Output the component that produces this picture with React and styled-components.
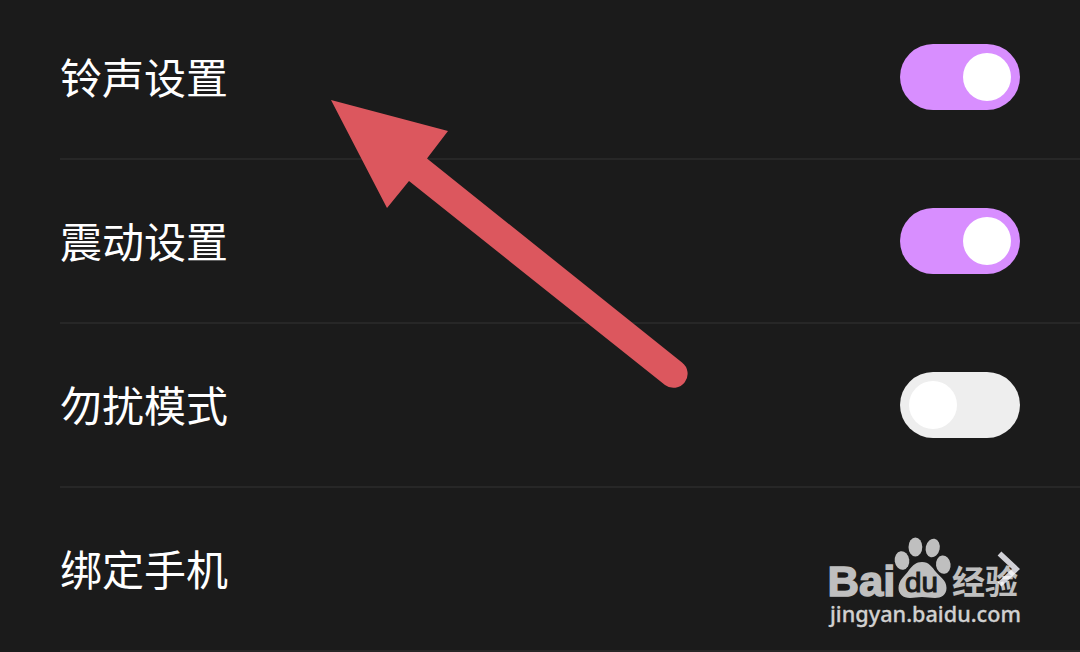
import React, { useState } from 'react';
import styled, { createGlobalStyle } from 'styled-components';

const GlobalStyle = createGlobalStyle`
  body {
    margin: 0;
    background: #1b1b1b;
  }
`;

const Screen = styled.div`
  position: relative;
  height: 652px;
  overflow: hidden;
  background: #1b1b1b;
  color: #fff;
  font-family: 'Noto Sans CJK SC', sans-serif;
`;

const List = styled.ul`
  list-style: none;
  margin: -4px 0 0;
  padding: 0 0 0 60px;
`;

const Row = styled.li`
  display: flex;
  align-items: center;
  justify-content: space-between;
  box-sizing: border-box;
  height: 164px;
  padding-right: 60px;
  border-bottom: 2px solid #272727;
`;

const Label = styled.span`
  padding-bottom: 2px;
  font-size: 42px;
  line-height: 60px;
`;

const Switch = styled.button`
  display: flex;
  align-items: center;
  justify-content: ${({ $on }) => ($on ? 'flex-end' : 'flex-start')};
  width: 120px;
  height: 66px;
  padding: 0 9px;
  border: none;
  border-radius: 33px;
  background: ${({ $on }) => ($on ? '#d88eff' : '#eeeeee')};
`;

const Knob = styled.span`
  width: 48px;
  height: 48px;
  border-radius: 50%;
  background: #fff;
`;

const Chevron = styled.svg`
  width: 24px;
  height: 40px;
`;

const Arrow = styled.svg`
  position: absolute;
  left: 330px;
  top: 98px;
  pointer-events: none;
`;

const Watermark = styled.svg`
  position: absolute;
  left: 820px;
  top: 530px;
  pointer-events: none;
`;

const Sample = () => {
  const [rows, setRows] = useState([
    { id: 1, title: '铃声设置', on: true },
    { id: 2, title: '震动设置', on: true },
    { id: 3, title: '勿扰模式', on: false },
    { id: 4, title: '绑定手机', link: true },
  ]);

  const toggle = id => {
    setRows(rows.map(row => (row.id === id ? { ...row, on: !row.on } : row)));
  };

  return (
    <Screen>
      <GlobalStyle />
      <List>
        {rows.map(row => (
          <Row key={row.id}>
            <Label>{row.title}</Label>
            {row.link ? (
              <Chevron viewBox="0 0 24 40">
                <path
                  d="M3.500 4.500 L20 20 L3.500 35.500"
                  fill="none"
                  stroke="#d0d0d6"
                  strokeWidth="5.500"
                />
              </Chevron>
            ) : (
              <Switch $on={row.on} onClick={() => toggle(row.id)}>
                <Knob />
              </Switch>
            )}
          </Row>
        ))}
      </List>

      <Arrow width="360" height="292" viewBox="330 98 360 292">
        <path
          d="M331 100 L448 131 L427 158.500 L682 362.500 A14 14 0 0 1 665 385 L409 181 L387 208 Z"
          fill="#dc575e"
        />
      </Arrow>

      <Watermark width="210" height="106" viewBox="820 530 210 106">
        <g fill="#fff" opacity="0.72">
          <text
            x="827.500"
            y="596"
            fontFamily="'Liberation Sans', sans-serif"
            fontWeight="700"
            fontSize="43"
            textLength="68"
            lengthAdjust="spacingAndGlyphs"
            stroke="#fff"
            strokeWidth="1.400"
          >
            Bai
          </text>
          <ellipse cx="902" cy="560.500" rx="7.300" ry="9.300" transform="rotate(-8 902 560.500)" />
          <ellipse cx="915.400" cy="547" rx="6.900" ry="9.500" />
          <ellipse cx="932.700" cy="548" rx="7" ry="9.400" transform="rotate(12 932.700 548)" />
          <ellipse cx="943.300" cy="564.700" rx="7.300" ry="9.200" transform="rotate(-8 943.300 564.700)" />
          <path d="M922 562 C929 562 932 567 936 572 C940 577 946.500 580 946.500 588 C946.500 595 941 598 935 598 C930 598 927 597 922 597 C917 597 915 598 910 598 C903 598 898.500 594 898.500 588 C898.500 580 905 576 909 570 C913 565 916 562 922 562 Z" />
          <text
            x="952"
            y="593.500"
            fontFamily="'Noto Sans CJK SC', sans-serif"
            fontWeight="700"
            fontSize="33"
            textLength="66"
          >
            经验
          </text>
        </g>
        <text
          x="905"
          y="591.500"
          fill="#1b1b1b"
          stroke="#1b1b1b"
          strokeWidth="1"
          fontFamily="'Liberation Sans', sans-serif"
          fontSize="27"
          textLength="33"
          lengthAdjust="spacingAndGlyphs"
        >
          du
        </text>
        <text
          x="830"
          y="621.500"
          fill="#d0d0d0"
          stroke="#d0d0d0"
          strokeWidth="0.300"
          fontFamily="'Noto Sans', sans-serif"
          fontWeight="500"
          fontSize="21"
          textLength="191"
          lengthAdjust="spacingAndGlyphs"
        >
          jingyan.baidu.com
        </text>
      </Watermark>
    </Screen>
  );
};

export default Sample;
